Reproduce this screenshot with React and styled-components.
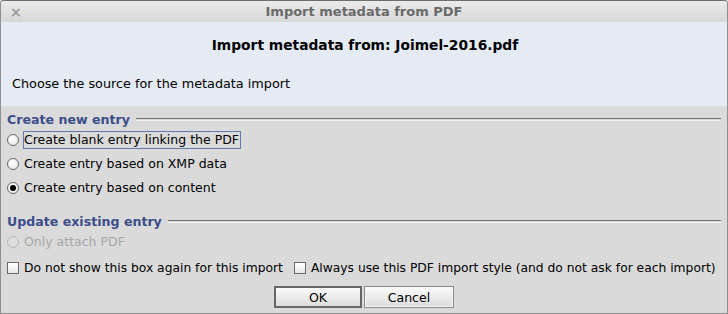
import React from "react";
import styled, { createGlobalStyle } from "styled-components";

const GlobalStyle = createGlobalStyle`
  html, body {
    margin: 0;
    padding: 0;
    background: #dadada;
  }
  body {
    font-family: "DejaVu Sans", "Liberation Sans", sans-serif;
    font-size: 12.5px;
    color: #000000;
  }
`;

const Window = styled.div`
  width: 728px;
  height: 314px;
  box-sizing: border-box;
  border: 1px solid #8e8e8e;
  border-top-color: #6e6e6e;
  border-radius: 4px 4px 0 0;
  background: #dadada;
  display: flex;
  flex-direction: column;
  overflow: hidden;
`;

const TitleBar = styled.div`
  height: 21px;
  flex: none;
  display: flex;
  align-items: center;
  justify-content: center;
  position: relative;
  background: linear-gradient(#ebebeb, #d7d7d7);
  font-weight: bold;
  font-size: 13px;
  color: #6a6a6a;
`;

const CloseGlyph = styled.span`
  position: absolute;
  left: 9px;
  top: 3px;
  font-size: 14px;
  color: #9a9a9a;
`;

const Header = styled.div`
  height: 84px;
  flex: none;
  box-sizing: border-box;
  background: #e5ebf5;
  display: flex;
  flex-direction: column;
  padding: 14px 9px 0 11px;
`;

const HeaderTitle = styled.div`
  text-align: center;
  font-weight: bold;
  font-size: 13.8px;
  line-height: 18px;
`;

const HeaderText = styled.div`
  margin-top: 22px;
  line-height: 16px;
  font-size: 12.8px;
`;

const Body = styled.div`
  flex: 1;
  display: flex;
  flex-direction: column;
  padding: 4px 6px 0 5px;
`;

const Section = styled.div`
  display: flex;
  align-items: center;
  gap: 6px;
  height: 18px;
  margin-left: 1px;
  font-weight: bold;
  font-size: 12.6px;
  color: #3c4d8a;
  margin-top: ${(p) => p.$top || 0}px;
`;

const Rule = styled.div`
  flex: 1;
  height: 1px;
  border-top: 1px solid #707070;
  border-bottom: 1px solid #f2f2f2;
  margin-top: 1px;
`;

const Option = styled.label`
  display: flex;
  align-items: center;
  height: 24px;
  gap: 4px;
  margin-left: 1px;
  color: ${(p) => (p.$disabled ? "#a8a8a8" : "#000000")};
`;

const Radio = styled.span`
  width: 10px;
  height: 10px;
  border-radius: 50%;
  flex: none;
  border: 1px solid ${(p) => (p.$disabled ? "#b8b8b8" : "#6a6a6a")};
  background: ${(p) =>
    p.$disabled ? "#dedede" : "radial-gradient(circle at 40% 35%, #ffffff, #e4e4e4)"};
  display: flex;
  align-items: center;
  justify-content: center;
  &::after {
    content: "";
    width: 6px;
    height: 6px;
    border-radius: 50%;
    background: ${(p) => (p.$checked ? "#000000" : "transparent")};
  }
`;

const LabelText = styled.span`
  padding: 0 1px 0 0;
  line-height: 16px;
  border: 1px solid ${(p) => (p.$focused ? "#6379a8" : "transparent")};
`;

const CheckRow = styled.div`
  display: flex;
  align-items: center;
  height: 26px;
  margin-top: 1px;
  margin-left: 1px;
  white-space: nowrap;
  font-size: 12.3px;
`;

const Check = styled.label`
  display: flex;
  flex: none;
  align-items: center;
  gap: 5px;
  margin-right: 11px;
`;

const Box = styled.span`
  width: 10px;
  height: 10px;
  flex: none;
  border: 1px solid #6a6a6a;
  background: linear-gradient(#ffffff, #e6e6e6);
`;

const Buttons = styled.div`
  display: flex;
  justify-content: center;
  gap: 2px;
  margin-top: 5px;
  padding-left: 1px;
`;

const Button = styled.button`
  width: ${(p) => p.$w}px;
  height: 22px;
  box-sizing: border-box;
  font-family: "DejaVu Sans", "Liberation Sans", sans-serif;
  font-size: 12.5px;
  color: #000000;
  background: linear-gradient(#fbfbfb, #dcdcdc);
  border: ${(p) => (p.$default ? "2px solid #666666" : "1px solid #8a8a8a")};
  box-shadow: ${(p) => (p.$default ? "none" : "inset 0 0 0 1px #f6f6f6")};
  padding: 0;
`;

export default function App() {
  return (
    <>
      <GlobalStyle />
      <Window>
        <TitleBar>
          <CloseGlyph>×</CloseGlyph>
          Import metadata from PDF
        </TitleBar>
        <Header>
          <HeaderTitle>Import metadata from: Joimel-2016.pdf</HeaderTitle>
          <HeaderText>Choose the source for the metadata import</HeaderText>
        </Header>
        <Body>
          <Section>
            Create new entry
            <Rule />
          </Section>
          <Option>
            <Radio />
            <LabelText $focused>Create blank entry linking the PDF</LabelText>
          </Option>
          <Option>
            <Radio />
            <LabelText>Create entry based on XMP data</LabelText>
          </Option>
          <Option>
            <Radio $checked />
            <LabelText>Create entry based on content</LabelText>
          </Option>
          <Section $top={12}>
            Update existing entry
            <Rule />
          </Section>
          <Option $disabled>
            <Radio $disabled />
            <LabelText>Only attach PDF</LabelText>
          </Option>
          <CheckRow>
            <Check>
              <Box />
              Do not show this box again for this import
            </Check>
            <Check>
              <Box />
              Always use this PDF import style (and do not ask for each import)
            </Check>
          </CheckRow>
          <Buttons>
            <Button $default $w={88}>OK</Button>
            <Button $w={90}>Cancel</Button>
          </Buttons>
        </Body>
      </Window>
    </>
  );
}
